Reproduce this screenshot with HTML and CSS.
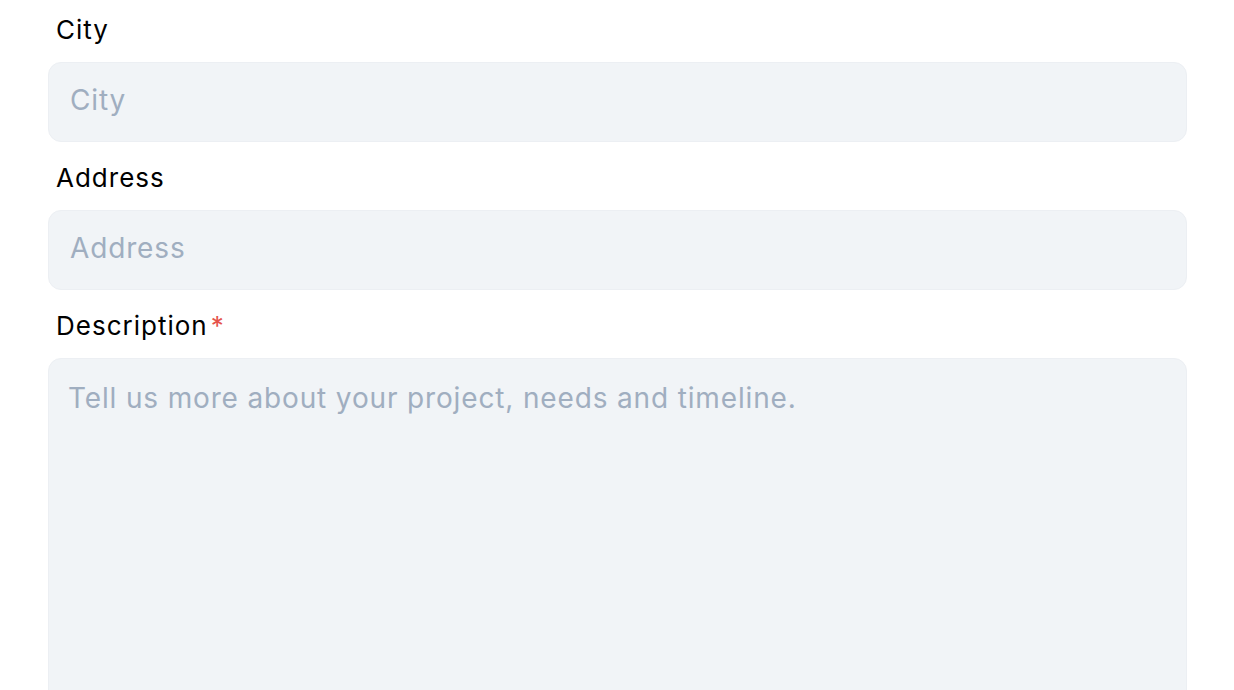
FILE: index.html
```html
<!DOCTYPE html>
<html lang="en">
<head>
<meta charset="utf-8">
<title>Form</title>
<link rel="stylesheet" href="styles.css">
</head>
<body>
<form class="form">
  <div class="field">
    <label class="label" for="city">City</label>
    <input class="input" id="city" type="text" placeholder="City">
  </div>
  <div class="field">
    <label class="label" for="address">Address</label>
    <input class="input" id="address" type="text" placeholder="Address">
  </div>
  <div class="field">
    <label class="label" for="desc">Description<span class="req">*</span></label>
    <textarea class="input textarea" id="desc" placeholder="Tell us more about your project, needs and timeline."></textarea>
  </div>
</form>
</body>
</html>
```
FILE: styles.css
```css
html, body {
  margin: 0;
  padding: 0;
  background: #ffffff;
}
body {
  font-family: Inter, "Noto Sans", sans-serif;
  overflow: hidden;
}
.form {
  display: flex;
  flex-direction: column;
  gap: 20px;
  padding: 14px 47px 0 48px;
}
.field {
  display: flex;
  flex-direction: column;
  gap: 16px;
}
.label {
  display: block;
  padding-left: 8px;
  font-size: 26px;
  line-height: 32px;
  color: #000000;
  letter-spacing: 1px;
}
.req {
  color: #e5534b;
  margin-left: 3px;
}
.input {
  box-sizing: border-box;
  width: 100%;
  height: 80px;
  margin: 0;
  padding: 0 20px 4px 21px;
  border: 1px solid #eceff3;
  border-radius: 13px;
  background: #f1f4f7;
  font-family: Inter, "Noto Sans", sans-serif;
  font-size: 28px;
  letter-spacing: 0.85px;
  color: #1a202c;
  outline: none;
}
.input::placeholder {
  color: #a0aec0;
  opacity: 1;
}
.textarea {
  height: 420px;
  padding: 21px 19px;
  resize: none;
  line-height: 36px;
}
```
